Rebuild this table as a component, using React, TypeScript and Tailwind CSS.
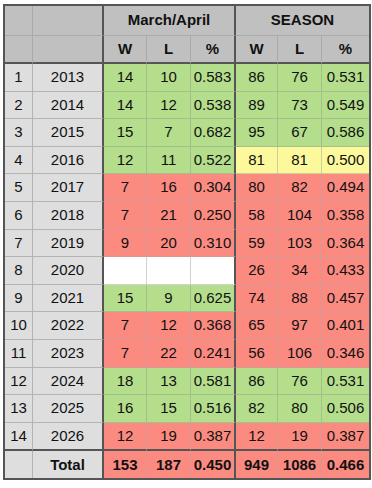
import React from "react";

type Tone = "g" | "r" | "y" | "w";

type Row = {
  n: number;
  year: number;
  ma: [string, string, string] | null;
  maTone: Tone;
  season: [string, string, string];
  seasonTone: Tone;
};

const rows: Row[] = [
  { n: 1, year: 2013, ma: ["14", "10", "0.583"], maTone: "g", season: ["86", "76", "0.531"], seasonTone: "g" },
  { n: 2, year: 2014, ma: ["14", "12", "0.538"], maTone: "g", season: ["89", "73", "0.549"], seasonTone: "g" },
  { n: 3, year: 2015, ma: ["15", "7", "0.682"], maTone: "g", season: ["95", "67", "0.586"], seasonTone: "g" },
  { n: 4, year: 2016, ma: ["12", "11", "0.522"], maTone: "g", season: ["81", "81", "0.500"], seasonTone: "y" },
  { n: 5, year: 2017, ma: ["7", "16", "0.304"], maTone: "r", season: ["80", "82", "0.494"], seasonTone: "r" },
  { n: 6, year: 2018, ma: ["7", "21", "0.250"], maTone: "r", season: ["58", "104", "0.358"], seasonTone: "r" },
  { n: 7, year: 2019, ma: ["9", "20", "0.310"], maTone: "r", season: ["59", "103", "0.364"], seasonTone: "r" },
  { n: 8, year: 2020, ma: null, maTone: "w", season: ["26", "34", "0.433"], seasonTone: "r" },
  { n: 9, year: 2021, ma: ["15", "9", "0.625"], maTone: "g", season: ["74", "88", "0.457"], seasonTone: "r" },
  { n: 10, year: 2022, ma: ["7", "12", "0.368"], maTone: "r", season: ["65", "97", "0.401"], seasonTone: "r" },
  { n: 11, year: 2023, ma: ["7", "22", "0.241"], maTone: "r", season: ["56", "106", "0.346"], seasonTone: "r" },
  { n: 12, year: 2024, ma: ["18", "13", "0.581"], maTone: "g", season: ["86", "76", "0.531"], seasonTone: "g" },
  { n: 13, year: 2025, ma: ["16", "15", "0.516"], maTone: "g", season: ["82", "80", "0.506"], seasonTone: "g" },
  { n: 14, year: 2026, ma: ["12", "19", "0.387"], maTone: "r", season: ["12", "19", "0.387"], seasonTone: "r" },
];

const toneBg: Record<Tone, string> = {
  g: "bg-[#b4de8c]",
  r: "bg-[#fb8b81]",
  y: "bg-[#fcf89c]",
  w: "bg-white",
};

const toneLine: Record<Tone, string> = {
  g: "border-[#a3bf8a]",
  r: "border-[#d89791]",
  y: "border-[#cfcc98]",
  w: "border-[#d2d2d2]",
};

function Cell({ className = "", children }: { className?: string; children?: React.ReactNode }) {
  return <div className={`flex items-center justify-center ${className}`}>{children}</div>;
}

export default function App() {
  return (
    <div className="min-h-[488px] bg-white pl-[3px] pt-[4px] font-['Liberation_Sans',Arial,sans-serif] text-[15px] text-[#111]">
      <div className="grid w-[368px] grid-cols-[28px_71px_43px_44px_45px_42px_44px_47px] grid-rows-[30px_28px_repeat(13,27.6px)_28.6px_27px] border-2 border-[#555]">
        {/* header row 1 */}
        <Cell className="border-b border-r border-[#aaa] bg-[#c0c0c0]" />
        <Cell className="border-b border-[#aaa] bg-[#c0c0c0] !border-r-2 !border-r-[#555]" />
        <Cell className="col-span-3 border-b border-[#aaa] bg-[#c0c0c0] font-bold !border-r-2 !border-r-[#555]">March/April</Cell>
        <Cell className="col-span-3 border-b border-[#aaa] bg-[#c0c0c0] font-bold">SEASON</Cell>

        {/* header row 2 */}
        <Cell className="border-r border-[#aaa] bg-[#c0c0c0] !border-b-2 !border-b-[#555]" />
        <Cell className="bg-[#c0c0c0] border-r-2 border-b-2 border-[#555]" />
        <Cell className="border-r border-[#aaa] bg-[#c0c0c0] font-bold !border-b-2 !border-b-[#555]">W</Cell>
        <Cell className="border-r border-[#aaa] bg-[#c0c0c0] font-bold !border-b-2 !border-b-[#555]">L</Cell>
        <Cell className="bg-[#c0c0c0] border-r-2 border-b-2 border-[#555] font-bold">%</Cell>
        <Cell className="border-r border-[#aaa] bg-[#c0c0c0] font-bold !border-b-2 !border-b-[#555]">W</Cell>
        <Cell className="border-r border-[#aaa] bg-[#c0c0c0] font-bold !border-b-2 !border-b-[#555]">L</Cell>
        <Cell className="bg-[#c0c0c0] border-b-2 border-[#555] font-bold">%</Cell>

        {rows.map((row, i) => {
          const last = i === rows.length - 1;
          const bottom = last ? "!border-b-2 !border-b-[#555]" : "";
          const ma = row.ma ?? ["", "", ""];
          return (
            <React.Fragment key={row.n}>
              <Cell className={`border-b border-r border-[#b4b4b4] bg-[#dedede] ${bottom}`}>{row.n}</Cell>
              <Cell className={`border-b border-[#b4b4b4] bg-[#dedede] !border-r-2 !border-r-[#555] ${bottom}`}>{row.year}</Cell>
              <Cell className={`border-b border-r ${toneLine[row.maTone]} ${toneBg[row.maTone]} ${bottom}`}>{ma[0]}</Cell>
              <Cell className={`border-b border-r ${toneLine[row.maTone]} ${toneBg[row.maTone]} ${bottom}`}>{ma[1]}</Cell>
              <Cell className={`border-b ${toneLine[row.maTone]} ${toneBg[row.maTone]} !border-r-2 !border-r-[#555] ${bottom}`}>{ma[2]}</Cell>
              <Cell className={`border-b border-r ${toneLine[row.seasonTone]} ${toneBg[row.seasonTone]} ${bottom}`}>{row.season[0]}</Cell>
              <Cell className={`border-b border-r ${toneLine[row.seasonTone]} ${toneBg[row.seasonTone]} ${bottom}`}>{row.season[1]}</Cell>
              <Cell className={`border-b ${toneLine[row.seasonTone]} ${toneBg[row.seasonTone]} ${bottom}`}>{row.season[2]}</Cell>
            </React.Fragment>
          );
        })}

        {/* total row */}
        <Cell className="border-r border-[#b4b4b4] bg-[#dedede]" />
        <Cell className="border-r-2 border-[#555] bg-[#dedede] font-bold">Total</Cell>
        <Cell className="border-r border-[#d89791] bg-[#fb8b81] font-bold">153</Cell>
        <Cell className="border-r border-[#d89791] bg-[#fb8b81] font-bold">187</Cell>
        <Cell className="border-r-2 border-[#555] bg-[#fb8b81] font-bold">0.450</Cell>
        <Cell className="border-r border-[#d89791] bg-[#fb8b81] font-bold">949</Cell>
        <Cell className="border-r border-[#d89791] bg-[#fb8b81] font-bold">1086</Cell>
        <Cell className="bg-[#fb8b81] font-bold">0.466</Cell>
      </div>
    </div>
  );
}
